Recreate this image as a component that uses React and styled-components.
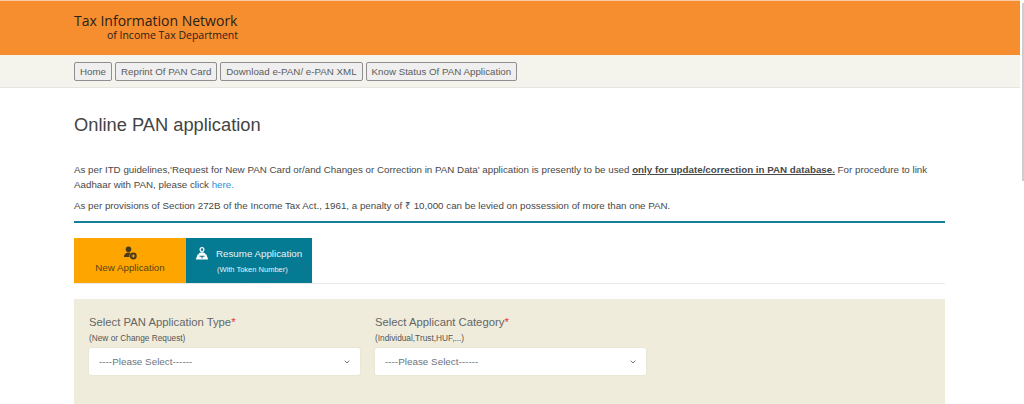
import React from "react";
import styled, { createGlobalStyle } from "styled-components";
import { ChevronDown } from "lucide-react";

const GlobalStyle = createGlobalStyle`
  html, body {
    margin: 0;
    padding: 0;
    background: #ffffff;
    overflow: hidden;
  }
  body {
    font-family: "Liberation Sans", Arial, sans-serif;
    color: #4a4a4a;
  }
`;

const Page = styled.div`
  width: 1024px;
  height: 404px;
  overflow: hidden;
  position: relative;
`;

const Header = styled.header`
  width: 1020px;
  height: 55px;
  border-top: 1px solid #fbc9a4;
  background: #f68d2e;
  padding: 11px 0 0 74px;
  box-sizing: border-box;
`;

const Logo = styled.div`
  width: 164px;
  color: #2a2118;
  font-family: "Open Sans", sans-serif;
  .big {
    font-size: 14px;
    line-height: 17px;
    white-space: nowrap;
  }
  .small {
    font-size: 10.5px;
    line-height: 13px;
    text-align: right;
    white-space: nowrap;
  }
`;

const NavBar = styled.nav`
  width: 1020px;
  height: 33px;
  box-sizing: border-box;
  background: #f4f4ec;
  border-bottom: 1px solid #e6e6e0;
  padding: 7px 0 0 74px;
  display: flex;
  gap: 3px;
  align-items: flex-start;
`;

const NavButton = styled.a`
  height: 19px;
  box-sizing: border-box;
  padding: 0 5px;
  border: 1px solid #8f8f8f;
  border-radius: 2px;
  background: #efefef;
  color: #5c5c5c;
  font-size: 9.75px;
  line-height: 17px;
  white-space: nowrap;
`;

const Content = styled.main`
  padding: 0 79px 0 74px;
`;

const Title = styled.h1`
  margin: 26px 0 0;
  font-weight: 400;
  font-size: 18.3px;
  line-height: 22px;
  color: #444;
`;

const Para = styled.p`
  margin: ${(p) => p.$top}px 0 0;
  width: 871px;
  font-size: 9.77px;
  line-height: 15px;
  color: #484848;
  strong {
    font-weight: 700;
    text-decoration: underline;
  }
  a {
    color: #2f8fd8;
  }
`;

const Rule = styled.div`
  width: 871px;
  margin-top: 8px;
  height: 2px;
  background: #147f98;
`;

const Tabs = styled.div`
  display: flex;
  width: 871px;
  margin-top: 15px;
  height: 45px;
  border-bottom: 1px solid #e8e8e8;
`;

const Tab = styled.div`
  position: relative;
  width: ${(p) => p.$w}px;
  height: 45px;
  background: ${(p) => p.$bg};
  color: ${(p) => p.$fg};
  font-size: 9.75px;
`;

const StackedTab = styled(Tab)`
  display: flex;
  flex-direction: column;
  align-items: center;
  padding-top: 8px;
  box-sizing: border-box;
  gap: 1px;
`;

const RowTab = styled(Tab)`
  display: flex;
  align-items: flex-start;
  padding: 9px 0 0 9px;
  box-sizing: border-box;
  gap: 7px;
`;

const TabText = styled.div`
  line-height: 13px;
  white-space: nowrap;
  small {
    display: block;
    font-size: 7.5px;
    line-height: 12px;
    margin: 4px 0 0 1px;
  }
`;

const Dots = styled.svg`
  position: absolute;
  left: 0;
  top: 0;
  pointer-events: none;
`;

const FormPanel = styled.section`
  width: 871px;
  height: 106px;
  margin-top: 15px;
  padding: 16px 15px 0;
  box-sizing: border-box;
  background: #efecdc;
  display: flex;
  gap: 15px;
`;

const Field = styled.div`
  width: 271px;
`;

const FieldLabel = styled.div`
  font-size: 11.3px;
  line-height: 15px;
  color: #666;
  span {
    color: #e33;
  }
`;

const FieldHint = styled.div`
  font-size: 8.3px;
  line-height: 10px;
  margin-top: 3px;
  color: #555;
`;

const SelectBox = styled.div`
  height: 27px;
  margin-top: 5px;
  padding: 0 9px 0 10px;
  box-sizing: border-box;
  background: #fff;
  border-radius: 2px;
  box-shadow: 0 0 2px rgba(0, 0, 0, 0.08);
  display: flex;
  align-items: center;
  justify-content: space-between;
  font-size: 9.9px;
  color: #6c757d;
`;

const Scrollbar = styled.div`
  position: absolute;
  top: 3px;
  right: 0;
  width: 2.5px;
  height: 178px;
  background: #cdcdcd;
`;

const UserPlusIcon = () => (
  <svg width="14" height="14" viewBox="0 0 14 14" fill="#4a3a1c">
    <circle cx="5.5" cy="3.2" r="2.8" />
    <path d="M1 11c0-3 2-4.6 4.5-4.6 1 0 1.7.2 2.3.5A4 4 0 0 0 6.6 11H1z" />
    <circle cx="10.3" cy="10" r="3.4" />
    <path d="M9.8 8.2h1v1.3h1.3v1h-1.3v1.3h-1v-1.3H8.5v-1h1.3z" fill="#ffa500" />
  </svg>
);

const ReaderIcon = () => (
  <svg width="14" height="14" viewBox="0 0 14 14">
    <circle cx="7" cy="2.6" r="1.9" fill="none" stroke="#fff" strokeWidth="1.2" />
    <path d="M3.4 8c0-1.8 1.6-2.8 3.6-2.8s3.6 1 3.6 2.8z" fill="#fff" />
    <path d="M0.8 12.6L2.6 7.6H11.4L13.2 12.6z" fill="#fff" />
    <path d="M4.5 8.800h5v.9H7.500v1.800h-1V9.700H4.500z" fill="#047a93" />
  </svg>
);

const App = () => {
  return (
    <Page>
      <GlobalStyle />
      <Header>
        <Logo>
          <div className="big">Tax Information Network</div>
          <div className="small">of Income Tax Department</div>
        </Logo>
      </Header>
      <NavBar>
        <NavButton>Home</NavButton>
        <NavButton>Reprint Of PAN Card</NavButton>
        <NavButton>Download e-PAN/ e-PAN XML</NavButton>
        <NavButton>Know Status Of PAN Application</NavButton>
      </NavBar>
      <Content>
        <Title>Online PAN application</Title>
        <Para $top={26}>
          As per ITD guidelines,'Request for New PAN Card or/and Changes or Correction in PAN Data' application is presently to be used <strong>only for update/correction in PAN database.</strong> For procedure to link Aadhaar with PAN, please click <a>here.</a>
        </Para>
        <Para $top={6}>
          As per provisions of Section 272B of the Income Tax Act., 1961, a penalty of ₹ 10,000 can be levied on possession of more than one PAN.
        </Para>
        <Rule />
        <Tabs>
          <StackedTab $w={112} $bg="#ffa500" $fg="#5a4516">
            <UserPlusIcon />
            <TabText>New Application</TabText>
          </StackedTab>
          <RowTab $w={126} $bg="#047a93" $fg="#e8f4f6">
            <ReaderIcon />
            <TabText>
              Resume Application
              <small>(With Token Number)</small>
            </TabText>
            <Dots width="126" height="45" viewBox="0 0 126 45">
              <polyline
                points="55,44 74,32 81,44 101,35 116,20 122,44"
                fill="none"
                stroke="#7b3f7d"
                strokeOpacity="0.55"
                strokeWidth="0.8"
                strokeDasharray="1 1.6"
              />
            </Dots>
          </RowTab>
        </Tabs>
        <FormPanel>
          <Field>
            <FieldLabel>Select PAN Application Type<span>*</span></FieldLabel>
            <FieldHint>(New or Change Request)</FieldHint>
            <SelectBox>----Please Select------<ChevronDown size={8} strokeWidth={3} /></SelectBox>
          </Field>
          <Field>
            <FieldLabel>Select Applicant Category<span>*</span></FieldLabel>
            <FieldHint>(Individual,Trust,HUF,...)</FieldHint>
            <SelectBox>----Please Select------<ChevronDown size={8} strokeWidth={3} /></SelectBox>
          </Field>
        </FormPanel>
      </Content>
      <Scrollbar />
    </Page>
  );
};

export default App;
